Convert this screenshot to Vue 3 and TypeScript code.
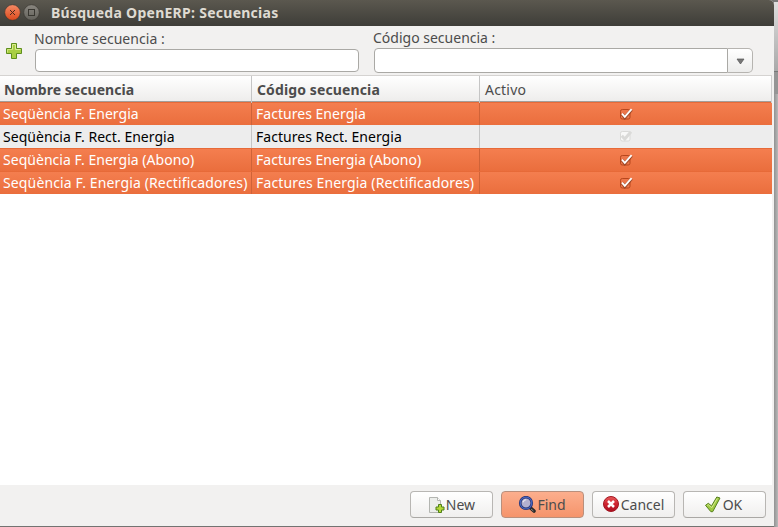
<script setup lang="ts">
interface Row {
  name: string
  code: string
  selected: boolean
}

const rows: Row[] = [
  { name: 'Seqüència F. Energia', code: 'Factures Energia', selected: true },
  { name: 'Seqüència F. Rect. Energia', code: 'Factures Rect. Energia', selected: false },
  { name: 'Seqüència F. Energia (Abono)', code: 'Factures Energia (Abono)', selected: true },
  { name: 'Seqüència F. Energia (Rectificadores)', code: 'Factures Energia (Rectificadores)', selected: true },
]
</script>

<template>
  <div class="desktop">
    <main class="window">
      <header class="titlebar">
        <svg class="controls" width="40" height="26" viewBox="0 0 40 26">
          <defs>
            <linearGradient id="closeFill" x1="0" y1="0" x2="0" y2="1">
              <stop offset="0" stop-color="#f58a65" />
              <stop offset="1" stop-color="#dc4a1d" />
            </linearGradient>
            <linearGradient id="maxFill" x1="0" y1="0" x2="0" y2="1">
              <stop offset="0" stop-color="#8a8780" />
              <stop offset="1" stop-color="#63615b" />
            </linearGradient>
          </defs>
          <circle cx="12.5" cy="12.5" r="7.8" fill="url(#closeFill)" stroke="#35332e" stroke-width=".6" />
          <path d="M10 10l5 5M15 10l-5 5" stroke="#4c291d" stroke-width="1" />
          <circle cx="31.5" cy="12.5" r="7.8" fill="url(#maxFill)" stroke="#35332e" stroke-width=".6" />
          <rect x="28.5" y="9.5" width="6" height="6" fill="none" stroke="#393731" />
        </svg>
        <h1>Búsqueda OpenERP: Secuencias</h1>
      </header>

      <section class="form">
        <svg class="plus" width="18" height="18" viewBox="0 0 18 18">
          <path d="M6.5 1.5h5v5h5v5h-5v5h-5v-5h-5v-5h5z" fill="#a9cf43" stroke="#5f8f1d" stroke-linejoin="round" />
          <path d="M7.5 7.5v-5h3v5h5" fill="none" stroke="#dceb93" />
          <path d="M2.5 10.5v-3h5" fill="none" stroke="#d0e57c" />
        </svg>
        <div class="field name-field">
          <label class="name-label">Nombre secuencia :</label>
          <div class="entry"></div>
        </div>
        <div class="field code-field">
          <label class="code-label">Código secuencia :</label>
          <div class="combo">
            <div class="combo-value"></div>
            <div class="combo-arrow">
              <svg width="9" height="7" viewBox="0 0 9 7"><path d="M1 1h7L4.5 6z" fill="#777" stroke="#555" stroke-width=".7" /></svg>
            </div>
          </div>
        </div>
      </section>

      <section class="table">
        <div class="row head">
          <div class="cell bold h-name"><span>Nombre secuencia</span></div>
          <div class="cell bold h-code"><span>Código secuencia</span></div>
          <div class="cell h-active"><span>Activo</span></div>
        </div>
        <div v-for="row in rows" :key="row.name" class="row" :class="{ selected: row.selected }">
          <div class="cell"><span>{{ row.name }}</span></div>
          <div class="cell"><span>{{ row.code }}</span></div>
          <div class="cell check">
            <svg v-if="row.selected" width="14" height="13" viewBox="0 0 14 13">
              <rect x="1.5" y="1.5" width="9.5" height="9.5" rx="1.8" fill="#ec764a" stroke="#b7471d" />
              <path d="M3 6l2.8 3.5L12.6 1.7" fill="none" stroke="#7e3a20" stroke-width="3.2" opacity=".65" />
              <path d="M3 5.6l2.8 3.3L12.6 1.2" fill="none" stroke="#fff" stroke-width="1.8" />
            </svg>
            <svg v-else width="14" height="13" viewBox="0 0 14 13">
              <rect x="1.5" y="1.5" width="9.5" height="9.5" rx="1.8" fill="#f8f8f7" stroke="#dadad8" />
              <path d="M2.8 5.8l3 3.2L12 1.7" fill="none" stroke="#dadad8" stroke-width="3" />
            </svg>
          </div>
        </div>
      </section>

      <footer class="actions">
        <button class="b-new">
          <svg width="18" height="18" viewBox="0 0 18 18">
            <path d="M2.5 1.5h8l3 3v12h-11z" fill="#eceeeb" stroke="#b3b5b1" />
            <path d="M10.5 1.5v3h3" fill="#fff" stroke="#b3b5b1" />
            <path d="M11.5 8.5h3v2.5h2.5v3h-2.5v2.5h-3v-2.5h-2.5v-3h2.5z" fill="#b5d838" stroke="#4f8018" />
          </svg><span>New</span>
        </button>
        <button class="b-find">
          <svg width="18" height="18" viewBox="0 0 18 18">
            <path d="M12 11.5l4 3.500" stroke="#292929" stroke-width="3.6" stroke-linecap="round" />
            <path d="M13 13l2.5 2" stroke="#8a8a88" stroke-width="1" />
            <circle cx="8" cy="7" r="5.8" fill="#b3b0d0" stroke="#202c68" stroke-width="2.600" />
            <circle cx="8" cy="7" r="5.8" fill="none" stroke="#4864bd" stroke-width="1.3" />
            <path d="M5 6.200q.8-2.4 3.2-2.5" fill="none" stroke="#e9e6ef" stroke-width="1.3" />
          </svg><span>Find</span>
        </button>
        <button class="b-cancel">
          <svg width="18" height="18" viewBox="0 0 18 18">
            <defs>
              <linearGradient id="cancelFill" x1="0" y1="0" x2="0" y2="1">
                <stop offset="0" stop-color="#e65a5a" />
                <stop offset=".5" stop-color="#cf2430" />
                <stop offset="1" stop-color="#a80e20" />
              </linearGradient>
            </defs>
            <circle cx="9" cy="8" r="7.5" fill="url(#cancelFill)" stroke="#a31621" />
            <path d="M6 5l6 6M12 5l-6 6" stroke="#fff" stroke-width="2.5" />
          </svg><span>Cancel</span>
        </button>
        <button class="b-ok">
          <svg width="18" height="18" viewBox="0 0 18 18">
            <path d="M1.500 9.300l2.800-2 3.200 2.600 5.300-8.900 3.200 1-7.300 13.700H6.900z" fill="#9fca43" stroke="#56801f" stroke-linejoin="round" />
            <path d="M3.200 9.400l1.100-.7 3.500 3 5.500-9.300" fill="none" stroke="#d4e98d" />
          </svg><span>OK</span>
        </button>
      </footer>
    </main>
    <aside class="backdrop"><i></i></aside>
  </div>
</template>

<style>
body {
  overflow: hidden;
}
</style>

<style scoped>
* {
  box-sizing: border-box;
}

.desktop {
  display: flex;
  width: 778px;
  height: 527px;
  background: #737371;
  color: #4c4c4c;
  font: 14px/20px "Noto Sans", "Open Sans", sans-serif;
  white-space: nowrap;
}

.window {
  display: flex;
  flex-direction: column;
  width: 774px;
  height: 526px;
  background: #f2f1f0;
  border-top-right-radius: 5px;
}

.titlebar {
  display: flex;
  align-items: center;
  height: 26px;
  background: linear-gradient(#5b584f, #3e3d38);
  border-top-right-radius: 5px;
}

.controls {
  flex: none;
}

h1 {
  margin: 0 0 0 11px;
  color: #dfdbd2;
  font-size: 14px;
  line-height: 26px;
  font-weight: 700;
  letter-spacing: 0.27px;
}

.form {
  display: flex;
  height: 49px;
}

.plus {
  margin: 16px 11px 0 5px;
}

.field {
  display: flex;
  flex-direction: column;
}

.field label {
  height: 20px;
}

.name-label {
  letter-spacing: 0.05px;
}

.name-field {
  width: 325px;
  padding-top: 3px;
}

.code-field {
  width: 380px;
  margin-left: 14px;
  padding-top: 2px;
}

.entry {
  height: 23px;
  margin-left: 1px;
  background: #fff;
  border: 1px solid #aaa9a5;
  border-radius: 4px;
}

.combo {
  display: flex;
  height: 25px;
  margin-left: 1px;
  width: 379px;
}

.combo-value {
  flex: 1;
  background: #fff;
  border: 1px solid #aaa9a5;
  border-radius: 4px 0 0 4px;
}

.combo-arrow {
  display: grid;
  place-items: center;
  width: 25px;
  padding-top: 2px;
  background: linear-gradient(#fff, #ececeb);
  border: 1px solid #b6b4b0;
  border-left: 0;
  border-radius: 0 5px 5px 0;
}

.table {
  flex: none;
  width: 772px;
  height: 410px;
  border-top: 1px solid #d5d3d1;
  background: #fff;
}

.row {
  display: grid;
  grid-template-columns: 252px 228px 292px;
  height: 23px;
  line-height: 23px;
  background: #ededed;
  color: #000;
  letter-spacing: 0.03px;
}

.cell {
  padding-left: 3px;
  border-right: 1px solid #c5c5c5;
}

.cell:nth-child(2) {
  padding-left: 4px;
}

.cell:last-child {
  border-right: 0;
}

.selected {
  color: #fff;
  background: linear-gradient(#f47e4f, #ea6e3d);
  border-top: 1px solid #e76a38;
}

.selected .cell {
  line-height: 22px;
  border-color: #cf6338;
}

.row:last-child {
  letter-spacing: 0.14px;
}

.head {
  height: 26px;
  line-height: 27px;
  color: #4c4c4c;
  background: linear-gradient(#fff, #eeedec);
  border-bottom: 1px solid #a39d99;
}

.head .cell {
  padding-left: 4px;
}

.head .cell:nth-child(2),
.head .cell:nth-child(3) {
  padding-left: 5px;
}

.head .h-active {
  border-right: 1px solid #d0d0d0;
  letter-spacing: 0.2px;
}

.bold {
  font-weight: 700;
}

.h-name {
  letter-spacing: 0.03px;
}

.h-code {
  letter-spacing: 0.12px;
}

.row .check {
  display: flex;
  align-items: center;
  padding: 0 0 0 139px;
}

.selected .check {
  padding-bottom: 0;
}

.actions {
  display: flex;
  gap: 8px;
  padding: 6px 8px 0 410px;
}

button {
  display: flex;
  align-items: center;
  justify-content: center;
  gap: 1px;
  width: 83px;
  height: 27px;
  flex: none;
  padding: 0 1px 0 0;
  color: #4c4c4c;
  font: inherit;
  background: linear-gradient(#fff, #f0efee);
  border: 1px solid #b8b6b3;
  border-bottom-color: #aaa8a5;
  border-radius: 4px;
}

.b-find {
  background: linear-gradient(#fcae8d, #f5946b);
  border-color: #b98f7c;
}

.b-ok {
  padding-right: 3px;
}

.backdrop {
  width: 4px;
  height: 527px;
  background: linear-gradient(90deg, #929292, #b9b9b9);
}

.backdrop i {
  display: block;
  height: 94px;
  background: linear-gradient(#777 0 2px, #ddd 2px, #a9a9a9 71px, #777 71px 72px, #959595 72px);
}
</style>
